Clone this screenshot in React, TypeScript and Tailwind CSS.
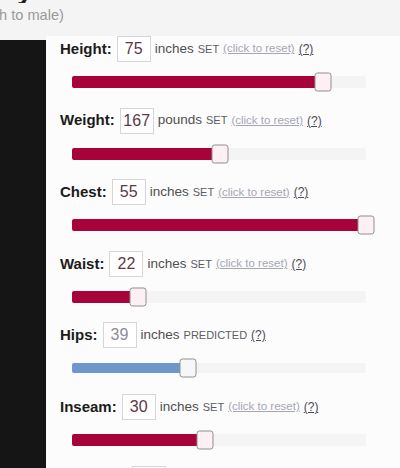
import React from 'react';

type Measure = {
  label: string;
  value: number;
  unit: string;
  pct: number;
  predicted?: boolean;
};

const measures: Measure[] = [
  { label: 'Height', value: 75, unit: 'inches', pct: 85.4 },
  { label: 'Weight', value: 167, unit: 'pounds', pct: 50.2 },
  { label: 'Chest', value: 55, unit: 'inches', pct: 100 },
  { label: 'Waist', value: 22, unit: 'inches', pct: 22.6 },
  { label: 'Hips', value: 39, unit: 'inches', pct: 39.5, predicted: true },
  { label: 'Inseam', value: 30, unit: 'inches', pct: 45.4 },
];

const Slider: React.FC<{ pct: number; predicted?: boolean }> = ({ pct, predicted }) => (
  <div className="relative ml-[12px] w-[294px]">
    <div className={`flex w-full rounded-[2px] bg-[#f4f4f4] ${predicted ? 'h-[10px]' : 'h-[12px]'}`}>
      <div
        className={`h-full rounded-l-[2px] ${predicted ? 'bg-[#7097cb]' : 'bg-[#a8023a]'}`}
        style={{ width: `${pct}%` }}
      />
    </div>
    {/* drag handle */}
    <div
      className={`absolute top-1/2 h-[19px] w-[17px] -translate-x-1/2 -translate-y-1/2 rounded-[3px] border-[1.5px] border-[#8e8e96] ${
        predicted ? 'bg-[#f7f7f9]' : 'bg-[#fcf0f4]'
      }`}
      style={{ left: `${pct}%` }}
    />
  </div>
);

const MeasureRow: React.FC<{ m: Measure }> = ({ m }) => (
  <div className="h-[71.6px] shrink-0">
    <div className="flex h-[26px] items-center whitespace-nowrap">
      <span className="text-[15px] font-bold text-[#1b1b1b]">{m.label}:</span>
      <div className="ml-[5px] flex h-[26px] w-[34px] items-center justify-center border border-[#d6d6d8] bg-white">
        <span className={`text-[16px] ${m.predicted ? 'text-[#8c8c98]' : 'text-[#5b3848]'}`}>{m.value}</span>
      </div>
      <span className="ml-[4px] text-[13.5px] text-[#4f4f4f]">{m.unit}</span>
      <span className="ml-[4px] text-[11px] text-[#5c5c66]">{m.predicted ? 'PREDICTED' : 'SET'}</span>
      {!m.predicted && (
        <span className="ml-[4px] text-[11.5px] text-[#a6a6b4] underline">(click to reset)</span>
      )}
      <span className="ml-[4px] text-[12px] text-[#4a4a55] underline">(?)</span>
    </div>
    <div className={m.predicted ? 'mt-[15px]' : 'mt-[14px]'}>
      <Slider pct={m.pct} predicted={m.predicted} />
    </div>
  </div>
);

const App: React.FC = () => {
  return (
    <div className="flex h-[468px] w-[400px] flex-col overflow-hidden bg-[#f4f4f4] font-['Liberation_Sans',Arial,sans-serif]">
      {/* page heading, scrolled mostly out of view */}
      <div className="h-[36px] shrink-0">
        <div className="ml-[17px] h-[3px] overflow-hidden">
          <div className="-mt-[24px] text-[28px] leading-[28px] font-bold text-[#222]">y</div>
        </div>
        <div className="-ml-[1px] mt-[3px] text-[14.6px] leading-[18px] text-[#9a9a9a]">h to male)</div>
      </div>

      <div className="flex min-h-0 flex-1">
        <div className="mt-[4px] w-[46px] shrink-0 bg-[#151515]" />
        <div className="flex flex-1 flex-col bg-[#fcfcfc] pl-[14px]">
          {measures.map((m) => (
            <MeasureRow key={m.label} m={m} />
          ))}
          {/* next field's input, below the fold */}
          <div className="ml-[72px] h-[26px] w-[34px] shrink-0 border border-[#d6d6d8] bg-white" />
        </div>
      </div>
    </div>
  );
};

export default App;
